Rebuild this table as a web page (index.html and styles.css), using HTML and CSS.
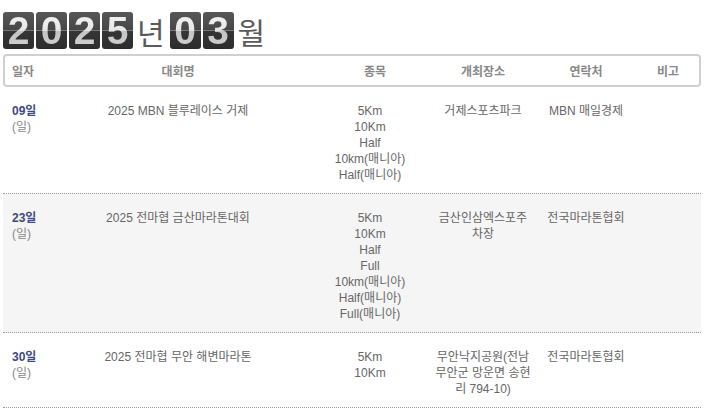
FILE: index.html
```html
<!DOCTYPE html>
<html lang="ko">
<head>
<meta charset="utf-8">
<link rel="stylesheet" href="styles.css">
</head>
<body>
<div class="page">
  <h1 class="title">
    <span class="tile"><span class="digit">2</span></span><span class="tile"><span class="digit">0</span></span><span class="tile"><span class="digit">2</span></span><span class="tile"><span class="digit">5</span></span>
    <span class="unit">년</span>
    <span class="tile"><span class="digit">0</span></span><span class="tile"><span class="digit">3</span></span>
    <span class="unit">월</span>
  </h1>

  <div class="thead">
    <div class="th th-date">일자</div>
    <div class="th">대회명</div>
    <div class="th th-event">종목</div>
    <div class="th">개최장소</div>
    <div class="th">연락처</div>
    <div class="th">비고</div>
  </div>

  <div class="row">
    <div class="cell date"><strong>09일</strong><span class="dow">(일)</span></div>
    <div class="cell">2025 MBN 블루레이스 거제</div>
    <div class="cell">5Km<br>10Km<br>Half<br>10km(매니아)<br>Half(매니아)</div>
    <div class="cell">거제스포츠파크</div>
    <div class="cell">MBN 매일경제</div>
    <div class="cell"></div>
  </div>

  <div class="row alt">
    <div class="cell date"><strong>23일</strong><span class="dow">(일)</span></div>
    <div class="cell">2025 전마협 금산마라톤대회</div>
    <div class="cell">5Km<br>10Km<br>Half<br>Full<br>10km(매니아)<br>Half(매니아)<br>Full(매니아)</div>
    <div class="cell">금산인삼엑스포주차장</div>
    <div class="cell">전국마라톤협회</div>
    <div class="cell"></div>
  </div>

  <div class="row">
    <div class="cell date"><strong>30일</strong><span class="dow">(일)</span></div>
    <div class="cell">2025 전마협 무안 해변마라톤</div>
    <div class="cell">5Km<br>10Km</div>
    <div class="cell">무안낙지공원(전남 무안군 망운면 송현리 794-10)</div>
    <div class="cell">전국마라톤협회</div>
    <div class="cell"></div>
  </div>
</div>
</body>
</html>
```

FILE: styles.css
```css
* { box-sizing: border-box; }
html, body { margin: 0; padding: 0; background: #fff; }
body {
  font-family: "Liberation Sans", "Noto Sans CJK KR", sans-serif;
  font-size: 12px;
  color: #666;
}
.page {
  width: 698px;
  margin-left: 3px;
  padding-top: 12px;
}
.title {
  margin: 0 0 5px 0;
  display: flex;
  align-items: center;
  gap: 2px;
  height: 37px;
  font-weight: normal;
}
.tile {
  position: relative;
  width: 31px;
  height: 37px;
  border-radius: 3px;
  background: linear-gradient(#575757 0%, #474747 48%, #353535 52%, #2c2c2c 100%);
  text-align: center;
}
.digit {
  display: block;
  font-family: "Liberation Sans", sans-serif;
  font-weight: bold;
  font-size: 39px;
  line-height: 37px;
  color: #e4e4e4;
  background: linear-gradient(#f4f4f4 0%, #e6e6e6 48%, #c4c4c4 52%, #d0d0d0 100%);
  -webkit-background-clip: text;
  background-clip: text;
  -webkit-text-fill-color: transparent;
}
.tile::after {
  content: "";
  position: absolute;
  left: 0;
  right: 0;
  top: 18px;
  height: 1px;
  background: rgba(255,255,255,0.3);
}
.unit {
  font-family: "Noto Sans CJK KR", sans-serif;
  font-size: 30px;
  line-height: 37px;
  color: #5a5a5a;
  margin: 2px 3px 0 2px;
}
.thead {
  display: grid;
  grid-template-columns: 42px 262px 122px 104px 102px 62px;
  align-items: center;
  height: 33px;
  border: 2px solid #cfcfcf;
  border-radius: 4px;
}
.th {
  font-family: "Noto Sans CJK KR", sans-serif;
  font-weight: bold;
  font-size: 12px;
  color: #888;
  text-align: center;
}
.th-date { text-align: left; padding-left: 7px; }
.th-event { padding-left: 10px; }
.row {
  display: grid;
  grid-template-columns: 44px 262px 122px 104px 102px 64px;
  padding: 16px 0 10px;
  border-bottom: 1px dotted #999;
  line-height: 16px;
}
.row.alt { background: #f5f5f5; }
.cell {
  text-align: center;
  padding: 0 4px;
  word-break: break-all;
}
.date {
  text-align: left;
  padding-left: 9px;
  display: flex;
  flex-direction: column;
}
.date strong {
  color: #3d4a80;
  font-weight: bold;
}
.dow { color: #888; }
```
